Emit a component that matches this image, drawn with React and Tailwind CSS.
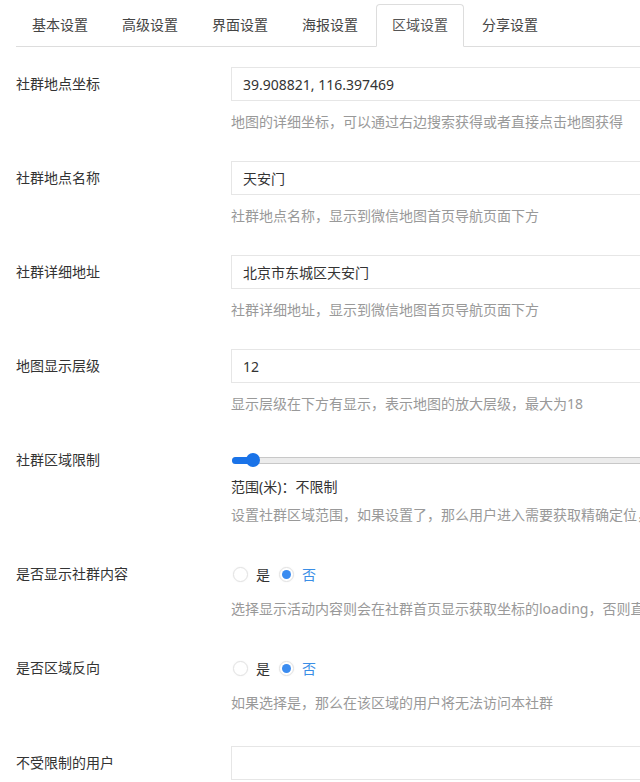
const tabs = ['基本设置', '高级设置', '界面设置', '海报设置', '区域设置', '分享设置'];

const font = { fontFamily: '"Noto Sans", "Noto Sans CJK SC", sans-serif' };

function Label({ children }) {
  return <div className="w-[215px] shrink-0 leading-[34px] text-[14px] text-[#333]">{children}</div>;
}

function Help({ children, className = '' }) {
  return <div className={`leading-5 text-[14px] text-[#999] whitespace-nowrap ${className}`}>{children}</div>;
}

function InputRow({ label, value, help, last }) {
  return (
    <div className={`flex ${last ? '' : 'pb-[29px]'}`}>
      <Label>{label}</Label>
      <div className="w-[520px] shrink-0">
        <div className="h-[34px] border border-[#e6e6e6] pl-[11px] flex items-center text-[14px] text-[#333]">
          {value}
        </div>
        {help && <Help className="mt-[11px]">{help}</Help>}
      </div>
    </div>
  );
}

function Radio({ checked, children }) {
  return (
    <div className="flex items-center">
      <span className="h-[15px] w-[15px] rounded-full border border-[#e2e2e2] bg-white shadow-[0_0_2px_rgba(0,0,0,0.06)] flex items-center justify-center">
        {checked && <span className="h-[9px] w-[9px] rounded-full bg-[#3b8cf0]" />}
      </span>
      <span className={`ml-[8px] text-[14px] ${checked ? 'text-[#3a8ee6]' : 'text-[#333]'}`}>{children}</span>
    </div>
  );
}

function RadioRow({ label, help, pb }) {
  return (
    <div className={`flex ${pb}`}>
      <Label>{label}</Label>
      <div className="w-[520px] shrink-0">
        <div className="h-[34px] flex items-center gap-[9px] pl-[2px]">
          <Radio>是</Radio>
          <Radio checked>否</Radio>
        </div>
        <Help className="mt-[8px]">{help}</Help>
      </div>
    </div>
  );
}

export default function App() {
  return (
    <div className="w-full min-h-screen bg-white overflow-hidden" style={font}>
      <div className="pl-4 pt-[4px] w-[760px]">
        {/* TABS */}
        <ul className="flex border-b border-[#ddd]">
          {tabs.map((t) => {
            const active = t === '区域设置';
            return (
              <li
                key={t}
                className={
                  active
                    ? 'mr-[2px] -mb-px px-[15px] py-[10px] leading-5 text-[14px] text-[#555] bg-white border border-[#ddd] border-b-white rounded-t-[4px]'
                    : 'mr-[2px] px-[15px] py-[10px] leading-5 text-[14px] text-[#444] border border-transparent'
                }
              >
                {t}
              </li>
            );
          })}
        </ul>

        {/* FORM */}
        <div className="pt-[20px]">
          <InputRow label="社群地点坐标" value="39.908821, 116.397469" help="地图的详细坐标，可以通过右边搜索获得或者直接点击地图获得" />
          <InputRow label="社群地点名称" value="天安门" help="社群地点名称，显示到微信地图首页导航页面下方" />
          <InputRow label="社群详细地址" value="北京市东城区天安门" help="社群详细地址，显示到微信地图首页导航页面下方" />
          <InputRow label="地图显示层级" value="12" help="显示层级在下方有显示，表示地图的放大层级，最大为18" />

          {/* slider */}
          <div className="flex pb-[32px]">
            <Label>社群区域限制</Label>
            <div className="w-[520px] shrink-0">
              <div className="h-[34px] flex items-center pl-[1px]">
                <div className="relative w-full h-[7px] border border-[#c8c8c8] bg-[#ececec] rounded-l-full">
                  <div className="absolute -left-px -top-px h-[7px] w-[22px] rounded-l-full bg-[#1a73e8]" />
                  <div className="absolute left-[13px] top-1/2 -translate-y-1/2 h-[14px] w-[14px] rounded-full bg-[#1a73e8]" />
                </div>
              </div>
              <div className="leading-5 text-[14px] text-[#333]">范围(米)：不限制</div>
              <Help className="mt-[8px]">设置社群区域范围，如果设置了，那么用户进入需要获取精确定位，否则无法访问</Help>
            </div>
          </div>

          <RadioRow label="是否显示社群内容" pb="pb-[32px]" help="选择显示活动内容则会在社群首页显示获取坐标的loading，否则直接显示社群内容" />
          <RadioRow label="是否区域反向" pb="pb-[33px]" help="如果选择是，那么在该区域的用户将无法访问本社群" />

          <InputRow label="不受限制的用户" value="" last />
        </div>
      </div>
    </div>
  );
}
